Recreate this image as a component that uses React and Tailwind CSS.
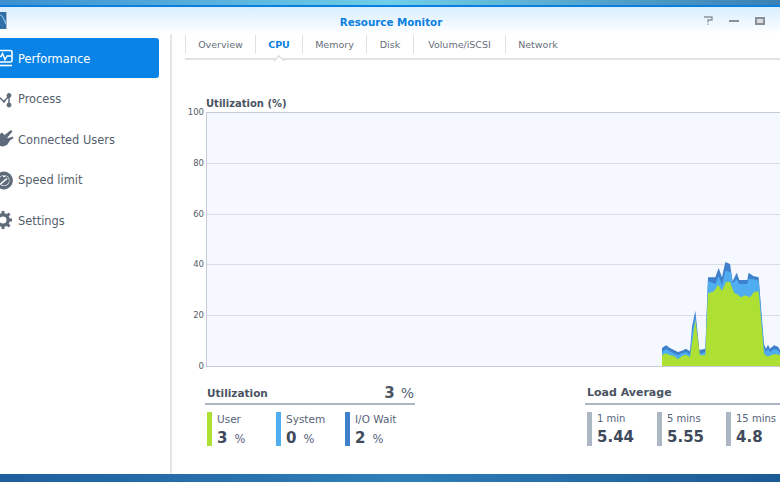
import React from 'react';

const PerfIcon = () => (
    <svg width="20" height="20" viewBox="0 0 20 20" className="-ml-[6px] shrink-0" fill="none" stroke="white">
        <rect x="1" y="2.500" width="17" height="11.500" rx="1.500" strokeWidth="1.600" />
        <path d="M3 8.500h4l1.500-3 2.500 6 2-3.500h4" strokeWidth="1.500" />
        <path d="M1 17.500h17" strokeWidth="1.600" />
    </svg>
);

const ProcessIcon = () => (
    <svg width="20" height="20" viewBox="0 0 20 20" className="-ml-[6px] shrink-0" fill="#5f6b7a" stroke="#5f6b7a">
        <path d="M5 8l5 4.500 5-5.500M15 6.500V16" fill="none" strokeWidth="1.500" />
        <circle cx="15" cy="6.500" r="2" />
        <circle cx="15" cy="16" r="2" />
        <circle cx="10" cy="12.500" r="0.800" />
    </svg>
);

const PlugIcon = () => (
    <svg width="20" height="20" viewBox="0 0 20 20" className="-ml-[6px] shrink-0" fill="#5f6b7a">
        <path d="M8 3.500l8 8-3 4.500-4 1.500-5-1-2-4 1.500-5.500z" />
        <path d="M10.500 6l6.500-5 1.500 1.500-5.500 6.500zM13.500 9.500l5-2 1 1.800-5 3z" />
    </svg>
);

const GaugeIcon = () => (
    <svg width="20" height="20" viewBox="0 0 20 20" className="-ml-[6px] shrink-0" fill="none">
        <circle cx="10" cy="10.500" r="7.200" stroke="#5f6b7a" strokeWidth="3.400" />
        <circle cx="10" cy="10.500" r="5" fill="#5f6b7a" />
        <path d="M6.500 14l6.500-5.500" stroke="white" strokeWidth="1.600" />
        <path d="M9 6.500h2.500" stroke="white" strokeWidth="1.200" />
    </svg>
);

const GearIcon = () => (
    <svg width="20" height="20" viewBox="0 0 20 20" className="-ml-[6px] shrink-0" fill="none" stroke="#5f6b7a">
        <circle cx="9" cy="10" r="5.200" strokeWidth="3.400" />
        <path d="M9 1v3M9 16v3M0 10h3M15 10h3M2.500 3.500l2 2M13.500 14.500l2 2M15.500 3.500l-2 2M4.500 14.500l-2 2" strokeWidth="3" />
    </svg>
);

const navItems = [
    { name: 'Performance', icon: PerfIcon, active: true },
    { name: 'Process', icon: ProcessIcon },
    { name: 'Connected Users', icon: PlugIcon },
    { name: 'Speed limit', icon: GaugeIcon },
    { name: 'Settings', icon: GearIcon },
];

const tabs = [
    { name: 'Overview', w: 'w-[70px]' },
    { name: 'CPU', w: 'w-[47px]', active: true },
    { name: 'Memory', w: 'w-[64px]' },
    { name: 'Disk', w: 'w-[47px]' },
    { name: 'Volume/iSCSI', w: 'w-[92px]' },
    { name: 'Network', w: 'w-[65px]' },
];

const Stat = ({ color, label, value, unit, w }) => (
    <div className={`flex gap-[5px] h-[34px] ${w}`}>
        <div className={`w-[5px] h-full ${color}`} />
        <div className="flex flex-col">
            <div className={`leading-[14px] text-[#56637a] ${unit ? 'text-[10.500px]' : 'text-[10px]'}`}>{label}</div>
            <div className={`flex items-baseline gap-[7px] leading-[20px] ${unit ? 'mt-[2px]' : 'mt-[1px]'}`}>
                <span className="text-[15px] font-bold text-[#404a5c]">{value}</span>
                {unit && <span className="text-[11.500px] text-[#56637a]">{unit}</span>}
            </div>
        </div>
    </div>
);

const Chart = () => (
    <svg width="574" height="255" viewBox="0 0 574 255" className="block">
        <rect x="0" y="0" width="574" height="254" fill="#f5f8ff" />
        {[0, 51, 102, 152, 203, 254].map(y => (
            <line key={y} x1="0" x2="574" y1={y + 0.5} y2={y + 0.5} stroke={y === 0 || y === 254 ? '#c6ccd6' : '#dadde2'} />
        ))}
        <line x1="0.5" x2="0.5" y1="0" y2="254" stroke="#c6ccd6" />
        <g transform="translate(434 138) scale(0.3333)">
            <path fill="#3f80cc" d="M66 348V294L78 286 90 294 102 300 114 306 126 302 138 296 150 304 156 230 166 182 178 300 196 296 204 82 226 82 236 54 246 82 256 36 270 42 278 94 290 68 298 90 322 90 326 68 340 78 356 82 372 282 378 296 384 284 390 296 402 286 414 290 420 300V348Z" />
            <path fill="#4fadf0" d="M66 348V306L78 298 90 304 102 310 114 316 126 310 138 306 150 314 156 250 166 198 178 312 196 306 204 92 226 102 236 78 246 106 256 62 272 66 278 100 290 88 298 102 322 102 326 86 340 88 356 92 372 294 378 306 384 296 390 306 402 298 414 300 420 310V348Z" />
            <path fill="#ade033" d="M66 348V316L78 310 90 316 102 318 114 328 126 318 138 314 150 322 166 210 180 316 196 316 204 130 222 124 234 104 246 122 258 96 270 96 282 128 294 134 302 142 316 136 330 142 342 126 356 124 372 312 384 320 396 314 408 312 420 316V348Z" />
        </g>
    </svg>
);

const App = () => {
    return (
        <div className="w-[780px] h-[482px] overflow-hidden flex flex-col bg-white font-['DejaVu_Sans',sans-serif]">
            {/* desktop strip behind the window */}
            <div className="h-[7px] shrink-0 bg-gradient-to-r from-[#3d8fcf] via-[#70cfe8] to-[#3a80b4] border-b-2 border-[#0a7fe2]" />

            {/* title bar */}
            <div className="h-[27px] shrink-0 relative flex items-center justify-center bg-gradient-to-b from-[#d8eeff] to-white">
                <span className="text-[10.300px] font-bold text-[#0b7fe0] ml-[2px] mt-[4px]">Resource Monitor</span>
                <svg width="7" height="17" viewBox="0 0 7 17" className="absolute left-0 top-[5px]">
                    <rect width="7" height="17" fill="#2f6ea6" />
                    <path d="M0 3c3 0 4 5 6 9" fill="none" stroke="#8fc4e8" strokeWidth="1.200" />
                    <path d="M6.500 0v17" stroke="#a9b8c6" />
                </svg>
                <div className="absolute right-[15px] top-[9px] flex items-center gap-[16px]">
                    <svg width="10" height="9" viewBox="0 0 10 9" fill="none" stroke="#8a9098">
                        <path d="M1 1h8v3H5v2.500" strokeWidth="1.300" />
                        <path d="M5 7.500V9" strokeWidth="1" />
                    </svg>
                    <div className="w-[10px] h-[2px] bg-[#8a9098]" />
                    <div className="w-[10px] h-[8px] border-2 border-[#8a9098] bg-[#d8dde2]" />
                </div>
            </div>

            <div className="flex-1 flex min-h-0">
                {/* sidebar */}
                <div className="w-[172px] shrink-0 border-r-2 border-[#e4e6e9] pt-[4px] flex flex-col gap-[0.500px]">
                    {navItems.map(item => (
                        <div
                            key={item.name}
                            className={`w-[159px] h-[40px] flex items-center gap-[4px] rounded-r-[3px] text-[11.400px] ${item.active ? 'bg-[#0a83e6] text-white' : 'text-[#55606e]'}`}
                        >
                            <item.icon />
                            <span className="mt-[3px]">{item.name}</span>
                        </div>
                    ))}
                </div>

                {/* main */}
                <div className="flex-1 min-w-0 flex flex-col pl-[13px]">
                    <div className="relative h-[26px] shrink-0 border-b-2 border-[#e0e2e5] flex">
                        {tabs.map(t => (
                            <div
                                key={t.name}
                                className={`${t.w} h-[19px] mt-[1px] pt-[2px] flex items-center justify-center border-l last:border-r border-[#dce1e6] text-[9.500px] ${t.active ? 'text-[#0b7fe0] font-bold' : 'text-[#666f7a]'}`}
                            >
                                {t.name}
                            </div>
                        ))}
                        {/* caret under the active tab */}
                        <div className="absolute left-[90px] -bottom-[7px] w-[8px] h-[8px] rotate-45 bg-white border-l border-t border-[#d4d7db]" />
                    </div>

                    <div className="text-[10px] font-bold text-[#4a5362] pl-[21px] mt-[37px] leading-[14px]">Utilization (%)</div>

                    <div className="flex mt-[1px] pl-[3px]">
                        <div className="w-[16px] h-[264px] -mt-[5px] mr-[2px] flex flex-col justify-between items-end text-[8.500px] leading-[10px] text-[#555c68]">
                            <span>100</span><span>80</span><span>60</span><span>40</span><span>20</span><span>0</span>
                        </div>
                        <Chart />
                    </div>

                    <div className="flex mt-[13px] pl-[20px]">
                        <div className="w-[210px] shrink-0">
                            <div className="flex items-center justify-between h-[18px] pl-[2px] pr-[1px] text-[#4a5362]">
                                <span className="text-[10.500px] font-bold mt-[1px]">Utilization</span>
                                <span className="flex items-baseline gap-[6px]">
                                    <span className="text-[15px] font-bold">3</span>
                                    <span className="text-[14px] text-[#56637a]">%</span>
                                </span>
                            </div>
                            <div className="h-[2px] bg-[#adb7c4] mt-[1px]" />
                            <div className="flex mt-[7px] pl-[2px]">
                                <Stat color="bg-[#ade033]" label="User" value="3" unit="%" w="w-[69px]" />
                                <Stat color="bg-[#4fadf0]" label="System" value="0" unit="%" w="w-[69px]" />
                                <Stat color="bg-[#3f80cc]" label="I/O Wait" value="2" unit="%" w="w-[69px]" />
                            </div>
                        </div>
                        <div className="ml-[170px] w-[300px] shrink-0">
                            <div className="h-[18px] pl-[2px] pt-[1px] text-[11px] font-bold text-[#4a5362] flex items-baseline">Load Average</div>
                            <div className="h-[2px] bg-[#adb7c4] mt-[1px]" />
                            <div className="flex mt-[7px] pl-[2px]">
                                <Stat color="bg-[#adb7c4]" label="1 min" value="5.44" w="w-[70px]" />
                                <Stat color="bg-[#adb7c4]" label="5 mins" value="5.55" w="w-[69px]" />
                                <Stat color="bg-[#adb7c4]" label="15 mins" value="4.8" w="w-[69px]" />
                            </div>
                        </div>
                    </div>
                </div>
            </div>

            {/* desktop strip below the window */}
            <div className="h-[8px] shrink-0 bg-gradient-to-r from-[#1f5f9f] via-[#2f7fb8] to-[#1c5a96]" />
        </div>
    );
};

export default App;
